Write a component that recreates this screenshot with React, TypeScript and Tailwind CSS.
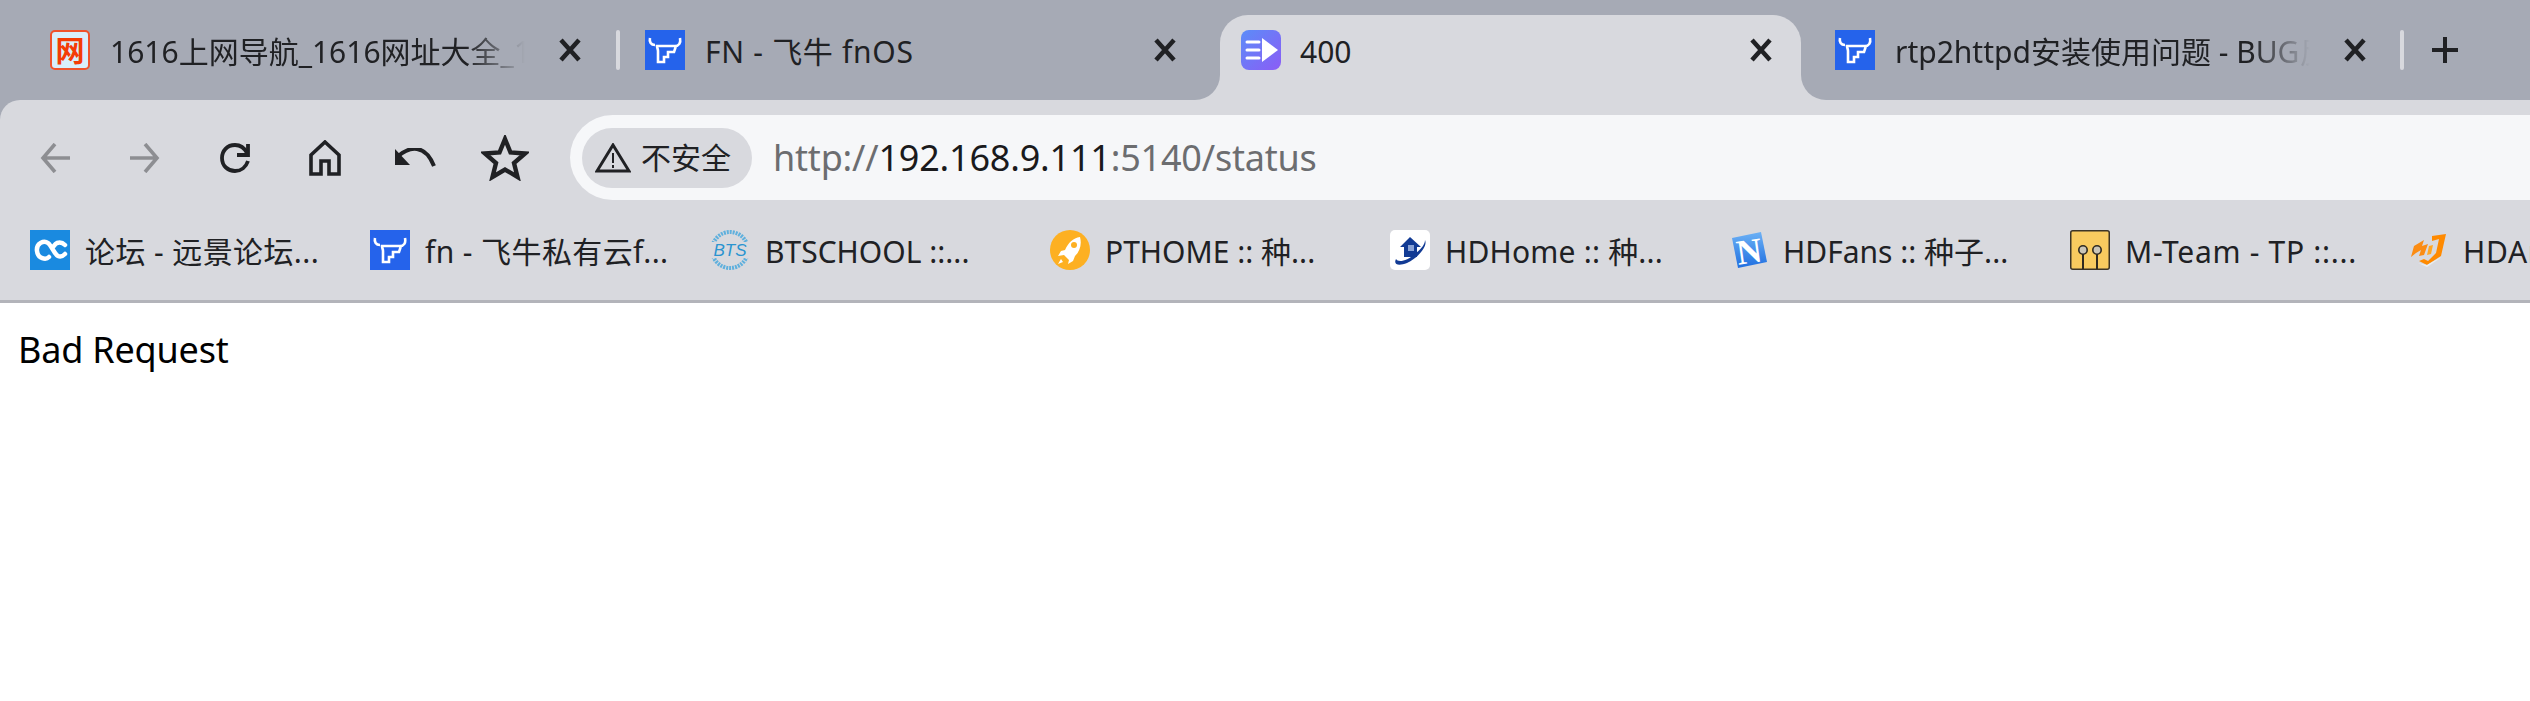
import type React from "react"

const FONT = "font-['Noto_Sans','Noto_Sans_CJK_SC',sans-serif]"

const CloseIcon: React.FC = () => (
  <svg width="36" height="36" viewBox="0 0 36 36" className="shrink-0">
    <path d="M9 8 L27 28 M27 8 L9 28" stroke="#202124" strokeWidth="4.5" fill="none" />
  </svg>
)

const BullIcon: React.FC = () => (
  <svg viewBox="0 0 40 40" className="w-10 h-10 shrink-0">
    <rect width="40" height="40" fill="#2563eb" />
    <path d="M5 8 C4 12 6 15 10 15" stroke="#fff" strokeWidth="2.6" fill="none" />
    <path d="M35 8 C36 13 34 16 30 16 L12 16 C12 18 13 19 13 21 L13 32 L19 32 L19 27 L23 27 L23 22 L29 22 L31 16" stroke="#fff" strokeWidth="2.6" fill="none" />
  </svg>
)

const WangIcon: React.FC = () => (
  <div className="w-10 h-10 shrink-0 rounded-[5px] border-2 border-[#f0532c] bg-[#d8effb] flex items-center justify-center text-[29px] leading-none font-bold text-[#f43c06]">
    网
  </div>
)

const PlayIcon: React.FC = () => (
  <svg viewBox="0 0 40 40" className="w-10 h-10 shrink-0">
    <defs>
      <linearGradient id="playGrad" x1="0" y1="0" x2="1" y2="1">
        <stop offset="0" stopColor="#5b8df8" />
        <stop offset="1" stopColor="#8b5cf6" />
      </linearGradient>
    </defs>
    <rect width="40" height="40" rx="8" fill="url(#playGrad)" />
    <path d="M6 12 H18 M6 20 H18 M6 28 H18" stroke="#fff" strokeWidth="3" strokeLinecap="round" fill="none" />
    <path d="M21 8 L37 20 L21 32 Z" fill="#fff" />
  </svg>
)

const OcIcon: React.FC = () => (
  <svg viewBox="0 0 40 40" className="w-10 h-10 shrink-0">
    <rect width="40" height="40" fill="#1a8ae0" />
    <path d="M19 27 C16 30 8 29 7 21 C6 13 14 10 18 13 C22 16 24 24 28 26 C30 27 33 26 35 24 M35 15 C33 13 30 12 27 13 C25 14 24 16 23 17" stroke="#fff" strokeWidth="4.5" fill="none" strokeLinecap="round" />
  </svg>
)

const BtsIcon: React.FC = () => (
  <svg viewBox="0 0 40 40" className="w-10 h-10 shrink-0">
    <circle cx="20" cy="20" r="18" fill="none" stroke="#5fb0dd" strokeWidth="4" strokeDasharray="2 1" />
    <rect x="0" y="12" width="40" height="16" fill="#d8d9de" />
    <text x="20" y="26" textAnchor="middle" fontSize="17" fontStyle="italic" fontFamily="'Liberation Sans',sans-serif" fill="#2a94d0">BTS</text>
  </svg>
)

const RocketIcon: React.FC = () => (
  <svg viewBox="0 0 40 40" className="w-10 h-10 shrink-0">
    <circle cx="20" cy="20" r="20" fill="#fdb022" />
    <path d="M30 7 C23 8 18 13 15 20 L11 21 L8 26 L14 25 L19 30 L18 34 L23 31 L25 26 C30 21 32 14 30 7 Z" fill="#fff" />
    <circle cx="24" cy="15" r="3" fill="#fdb022" />
    <path d="M11 29 L8 34 L13 32 Z" fill="#fff" />
  </svg>
)

const HomeLogoIcon: React.FC = () => (
  <svg viewBox="0 0 40 40" className="w-10 h-10 shrink-0">
    <rect width="40" height="40" rx="5" fill="#fff" />
    <path d="M20 7 L31 17 L27 17 L27 27 L14 27 L14 17 L10 17 Z" fill="#123b94" />
    <path d="M35 10 C38 16 28 28 17 33 C9 36 3 35 6 29 C8 33 18 31 26 23 C32 18 35 14 35 10 Z" fill="#123b94" />
    <rect x="18" y="15" width="6" height="6" fill="#8aa3d6" />
  </svg>
)

const NIcon: React.FC = () => (
  <svg viewBox="0 0 38 40" className="w-[38px] h-10 shrink-0">
    <defs>
      <linearGradient id="nGrad" x1="0" y1="0" x2="0" y2="1">
        <stop offset="0" stopColor="#6cb1f5" />
        <stop offset="1" stopColor="#1f6fe0" />
      </linearGradient>
    </defs>
    <path d="M2 8 L31 2 L37 32 L8 38 Z" fill="url(#nGrad)" />
    <text x="19" y="33" textAnchor="middle" fontSize="35" fontWeight="bold" fontFamily="'Liberation Serif',serif" fill="#fff" transform="rotate(-8 19 20)">N</text>
  </svg>
)

const MTeamIcon: React.FC = () => (
  <svg viewBox="0 0 40 40" className="w-10 h-10 shrink-0">
    <rect x="0.75" y="0.75" width="38.5" height="38.5" rx="2" fill="#f8cb5f" stroke="#3c3526" strokeWidth="1.5" />
    <circle cx="13" cy="20" r="4.2" fill="#c9c5b8" stroke="#2f2a20" strokeWidth="1.6" />
    <circle cx="27" cy="20" r="4.2" fill="#c9c5b8" stroke="#2f2a20" strokeWidth="1.6" />
    <path d="M13 24 V39 M27 24 V39" stroke="#2f2a20" strokeWidth="2" />
  </svg>
)

const HdaIcon: React.FC = () => (
  <svg viewBox="0 0 38 34" className="w-[38px] h-[34px] shrink-0">
    <path d="M4 13 L14 7 L12 13 L18 11 L14 22 L9 23 L11 17 L6 20 L1 24 Z" fill="#fb8c14" />
    <path d="M22 3 L36 1 L31 23 L17 32 L9 28 L14 26 L18 28 L26 20 L29 6 L22 8 Z" fill="#ff8a00" />
    <path d="M17 32 L31 24 L29 26 L17 34 L8 30 Z" fill="#e8eef2" />
    <path d="M19 13 L23 12 L21 21 L17 22 Z" fill="#ffa726" />
  </svg>
)

const FadeTitle: React.FC<{ text: string }> = ({ text }) => (
  <div className="flex-1 min-w-0 mr-[23px] pt-[2px] overflow-hidden whitespace-nowrap [mask-image:linear-gradient(to_right,black_85%,transparent_99%)]">
    {text}
  </div>
)

const Separator: React.FC = () => <div className="w-1 h-10 rounded-sm bg-[#d8d9de] shrink-0" />

const Tabs: React.FC = () => (
  <div className="flex h-[100px] bg-[#a6aab5] text-[30px] text-[#202124]">
    <div className="w-[616px] pl-[50px] pr-[28px] pt-[30px]">
      <div className="h-10 flex items-center">
        <WangIcon />
        <div className="w-5 shrink-0" />
        <FadeTitle text="1616上网导航_1616网址大全_1616" />
        <CloseIcon />
      </div>
    </div>
    <div className="pt-[30px]">
      <Separator />
    </div>
    <div className="w-[600px] pl-[25px] pr-[37px] pt-[30px]">
      <div className="h-10 flex items-center gap-5">
        <BullIcon />
        <div className="flex-1 pt-[2px] tracking-[0.7px]">FN - 飞牛 fnOS</div>
        <CloseIcon />
      </div>
    </div>
    <div className="relative w-[581px] mt-[15px] pt-[15px] pl-[21px] pr-[22px] bg-[#d8d9de] rounded-t-[28px]">
      <div className="absolute -left-[25px] bottom-0 w-[25px] h-[25px] bg-[#d8d9de]">
        <div className="w-full h-full bg-[#a6aab5] rounded-br-[25px]" />
      </div>
      <div className="h-10 flex items-center gap-[19px]">
        <PlayIcon />
        <div className="flex-1 pt-[2px]">400</div>
        <CloseIcon />
      </div>
      <div className="absolute -right-[25px] bottom-0 w-[25px] h-[25px] bg-[#d8d9de]">
        <div className="w-full h-full bg-[#a6aab5] rounded-bl-[25px]" />
      </div>
    </div>
    <div className="w-[599px] pl-[34px] pr-[27px] pt-[30px]">
      <div className="h-10 flex items-center">
        <BullIcon />
        <div className="w-5 shrink-0" />
        <FadeTitle text="rtp2httpd安装使用问题 - BUG反馈" />
        <CloseIcon />
      </div>
    </div>
    <div className="pt-[30px]">
      <Separator />
    </div>
    <div className="pt-[30px] pl-[26px]">
      <svg width="30" height="40" viewBox="0 0 30 40">
        <path d="M15 7 V33 M2 20 H28" stroke="#202124" strokeWidth="4" fill="none" />
      </svg>
    </div>
  </div>
)

const ToolButton: React.FC<{ children: React.ReactNode }> = ({ children }) => (
  <div className="w-[90px] h-[60px] flex items-center justify-center shrink-0">{children}</div>
)

const Toolbar: React.FC = () => (
  <div className="flex items-center pl-[10px] pt-[15px] h-[100px] bg-[#d8d9de] rounded-tl-[20px]">
    <ToolButton>
      <svg width="30" height="30" viewBox="0 0 30 30">
        <path d="M15 1 L3 15 L15 29 M3 15 H30" stroke="#8d8e92" strokeWidth="3.6" fill="none" />
      </svg>
    </ToolButton>
    <ToolButton>
      <svg width="30" height="30" viewBox="0 0 30 30">
        <path d="M15 1 L27 15 L15 29 M27 15 H0" stroke="#8d8e92" strokeWidth="3.6" fill="none" />
      </svg>
    </ToolButton>
    <ToolButton>
      <svg width="32" height="32" viewBox="0 0 32 32">
        <path d="M28 11 C25 5 21 3 16 3 C8 3 3 9 3 16 C3 24 9 29 16 29 C22 29 27 25 29 19" stroke="#202124" strokeWidth="3.8" fill="none" />
        <path d="M29 2 V13 H18" stroke="#202124" strokeWidth="3.8" fill="none" />
      </svg>
    </ToolButton>
    <ToolButton>
      <svg width="32" height="36" viewBox="0 0 32 36">
        <path d="M16 2 L30 15 V34 H20 V21 H12 V34 H2 V15 Z" stroke="#202124" strokeWidth="3.6" fill="none" />
      </svg>
    </ToolButton>
    <ToolButton>
      <svg width="42" height="20" viewBox="0 0 42 20">
        <path d="M3 9 C11 2 17 0 23 1 C31 2 36 8 40 18" stroke="#202124" strokeWidth="4" fill="none" />
        <path d="M1 1 V17 H16 Z" fill="#202124" />
      </svg>
    </ToolButton>
    <ToolButton>
      <svg width="48" height="46" viewBox="0 0 48 46">
        <path d="M24 4 L29.5 17.5 L44 18.5 L33 28 L36.5 42 L24 34.5 L11.5 42 L15 28 L4 18.5 L18.5 17.5 Z" stroke="#202124" strokeWidth="4.4" fill="none" />
      </svg>
    </ToolButton>
    <div className="flex-1 ml-[20px] h-[85px] flex items-center pl-3 bg-[#f6f7f9] rounded-l-full">
      <div className="w-[170px] h-[60px] shrink-0 flex items-center gap-[10px] pl-[13px] rounded-full bg-[#d8d9de] text-[30px] text-[#202124]">
        <svg width="36" height="30" viewBox="0 0 36 30" className="shrink-0">
          <path d="M18 2 L34 28 H2 Z" stroke="#202124" strokeWidth="3" fill="none" />
          <path d="M18 10 V20 M18 22 V25" stroke="#202124" strokeWidth="2" fill="none" />
        </svg>
        <span>不安全</span>
      </div>
      <div className="ml-[21px] text-[36px] tracking-[-0.2px] whitespace-nowrap text-[#6c6d70]">
        http://<span className="text-[#1a1a1c]">192.168.9.111</span>:5140/status
      </div>
    </div>
  </div>
)

const bookmarks: { icon: React.ReactNode; label: string; textClass: string }[] = [
  { icon: <OcIcon />, label: "论坛 - 远景论坛...", textClass: "tracking-[0.4px]" },
  { icon: <BullIcon />, label: "fn - 飞牛私有云f...", textClass: "tracking-[0.4px]" },
  { icon: <BtsIcon />, label: "BTSCHOOL ::...", textClass: "" },
  { icon: <RocketIcon />, label: "PTHOME :: 种...", textClass: "" },
  { icon: <HomeLogoIcon />, label: "HDHome :: 种...", textClass: "tracking-[0.2px]" },
  { icon: <NIcon />, label: "HDFans :: 种子...", textClass: "" },
  { icon: <MTeamIcon />, label: "M-Team - TP ::...", textClass: "tracking-[0.7px]" },
  { icon: <HdaIcon />, label: "HDArea :: 种...", textClass: "tracking-[0.7px]" },
]

const Bookmarks: React.FC = () => (
  <div className="flex items-center h-[103px] pl-[30px] bg-[#d8d9de] border-b-[3px] border-[#b3b4ba] text-[30px] text-[#202124] overflow-hidden">
    {bookmarks.map((b) => (
      <div key={b.label} className="w-[340px] shrink-0 flex items-center gap-[15px] whitespace-nowrap">
        {b.icon}
        <span className={`pt-[3px] ${b.textClass}`}>{b.label}</span>
      </div>
    ))}
  </div>
)

export default function App() {
  return (
    <div className={`w-[2530px] h-[701px] overflow-hidden bg-white ${FONT}`}>
      <div className="bg-[#a6aab5]">
        <Tabs />
        <Toolbar />
      </div>
      <Bookmarks />
      <div className="pl-[18px] pt-[22px] text-[36px] tracking-[-0.2px] leading-[50px] text-black">Bad Request</div>
    </div>
  )
}
